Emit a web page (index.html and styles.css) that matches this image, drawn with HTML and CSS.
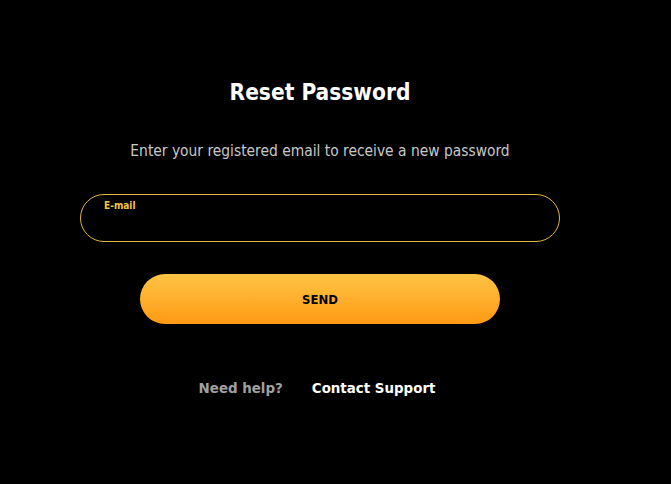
FILE: index.html
```html
<!DOCTYPE html>
<html lang="en">
<head>
<meta charset="utf-8">
<title>Reset Password</title>
<link rel="stylesheet" href="styles.css">
</head>
<body>
<main class="reset">
  <h1 class="reset__title">Reset Password</h1>
  <p class="reset__subtitle">Enter your registered email to receive a new password</p>
  <form class="reset__form">
    <label class="field">
      <span class="field__label">E-mail</span>
      <input class="field__input" type="email">
    </label>
    <button class="btn-send" type="button">SEND</button>
  </form>
  <div class="help">
    <span class="help__muted">Need help?</span>
    <a class="help__link" href="#">Contact Support</a>
  </div>
</main>
</body>
</html>
```

FILE: styles.css
```css
html, body {
  margin: 0;
  padding: 0;
  background: #000;
  height: 100%;
}
body {
  font-family: "DejaVu Sans Condensed", "DejaVu Sans", sans-serif;
  color: #fff;
}
.reset {
  width: 480px;
  margin-left: 80px;
  padding-top: 78px;
  display: flex;
  flex-direction: column;
  align-items: center;
}
.reset__title {
  margin: 0;
  font-size: 22.5px;
  line-height: 28px;
  font-weight: bold;
}
.reset__subtitle {
  margin: 35px 0 0;
  font-size: 15.4px;
  line-height: 20px;
  color: #c8c8c8;
}
.reset__form {
  width: 100%;
  margin-top: 33px;
  display: flex;
  flex-direction: column;
  align-items: center;
}
.field {
  position: relative;
  display: block;
  width: 100%;
  height: 48px;
  box-sizing: border-box;
  border: 1px solid #e2b53c;
  border-radius: 24px;
}
.field__label {
  position: absolute;
  left: 23px;
  top: 5px;
  font-size: 10px;
  font-weight: bold;
  color: #f2c540;
}
.field__input {
  width: 100%;
  height: 100%;
  box-sizing: border-box;
  background: transparent;
  border: 0;
  outline: none;
  padding: 14px 24px 0;
  color: #fff;
}
.btn-send {
  margin-top: 32px;
  width: 360px;
  height: 50px;
  border: 0;
  border-radius: 25px;
  background: linear-gradient(#ffc445, #ff9a14);
  font-family: inherit;
  font-size: 13px;
  font-weight: bold;
  color: #000;
}
.help {
  margin-top: 55px;
  padding-right: 6px;
  display: flex;
  gap: 29px;
  font-size: 14.9px;
  font-weight: bold;
}
.help__muted {
  color: #a0a0a0;
}
.help__link {
  color: #fff;
  text-decoration: none;
}
```
